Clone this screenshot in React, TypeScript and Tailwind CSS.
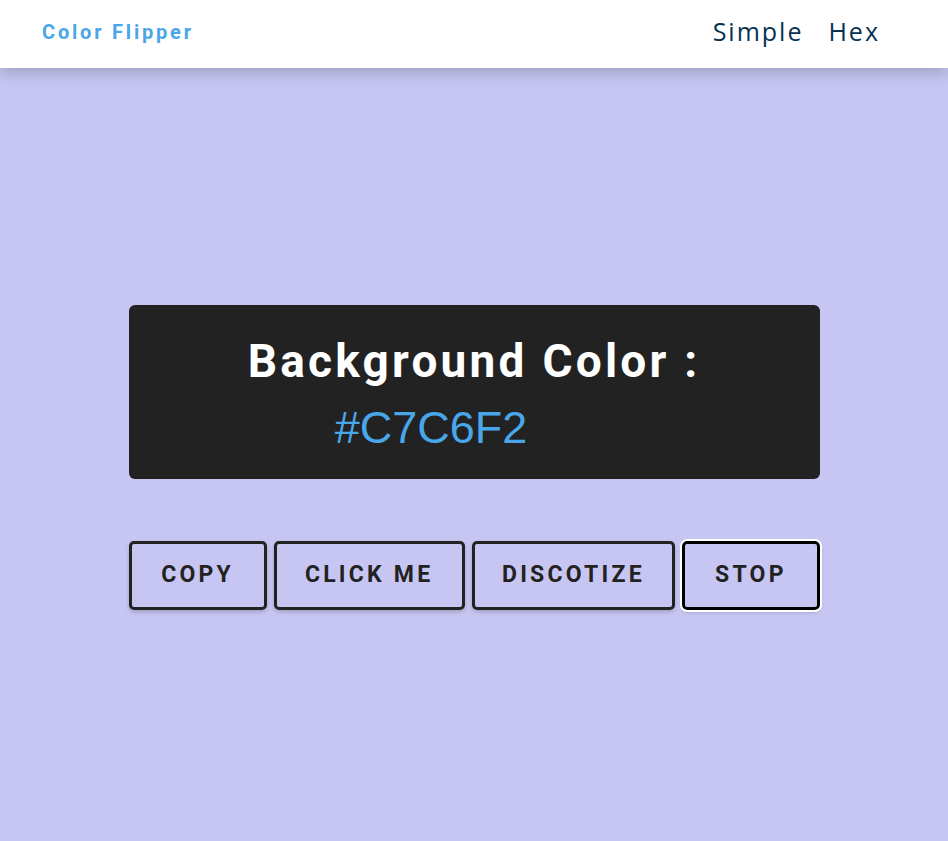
const buttons = [
  { label: "COPY", w: "w-[139px]" },
  { label: "CLICK ME", w: "w-[192px]" },
  { label: "DISCOTIZE", w: "w-[205px]" },
  { label: "STOP", w: "w-[138px]", focused: true },
];

export default function App() {
  return (
    <div className="flex min-h-[841px] flex-col bg-[#c7c6f2] font-['Roboto',sans-serif]">
      <nav className="relative z-10 flex h-[68px] items-center justify-between bg-white pb-[4px] pl-[42px] pr-[68px] shadow-[0_5px_15px_rgba(0,0,0,0.2)]">
        <h4 className="text-[20px] font-bold tracking-[0.14em] text-[#49a6e9]">
          Color Flipper
        </h4>
        <ul className="flex gap-[25px] font-['Open_Sans',sans-serif] text-[25px] tracking-[0.08em] text-[#063251]">
          <li>Simple</li>
          <li>Hex</li>
        </ul>
      </nav>

      <main className="flex flex-1 flex-col items-center justify-center pt-[6px]">
        <div className="flex h-[174px] w-[691px] flex-col items-center rounded-md bg-[#222] pt-[28px]">
          <h2 className="text-[46px] leading-[56px] font-bold tracking-[0.07em] text-white">
            Background Color :
          </h2>
          <span className="-ml-[86px] mt-[14px] font-['Liberation_Sans',sans-serif] text-[45px] leading-[50px] text-[#49a6e9]">
            #C7C6F2
          </span>
        </div>

        <div className="mt-[62px] flex w-[691px] gap-[7px]">
          {buttons.map((b) => (
            <button
              key={b.label}
              className={`${b.w} h-[69px] rounded-[5px] border-[3px] text-[23px] font-bold tracking-[0.14em] text-[#222] shadow-[0_2px_4px_rgba(0,0,0,0.2)] ${
                b.focused
                  ? "border-black outline-2 outline-white"
                  : "border-[#222]"
              }`}
            >
              {b.label}
            </button>
          ))}
        </div>
      </main>
    </div>
  );
}
